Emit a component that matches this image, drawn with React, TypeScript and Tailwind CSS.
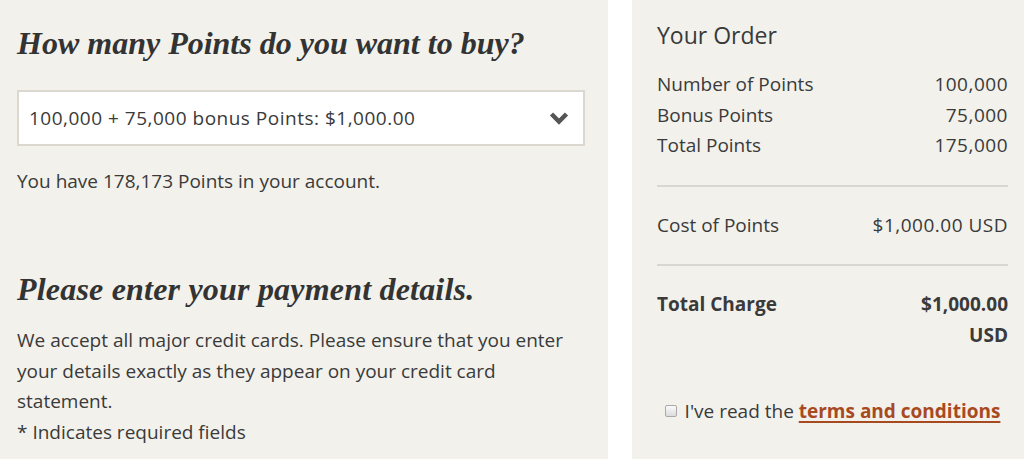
import React from "react";

const sans = { fontFamily: '"Open Sans", "Liberation Sans", sans-serif' };
const serif = { fontFamily: '"Liberation Serif", "DejaVu Serif", serif' };

function Row({ label, value }: { label: string; value: string }) {
  return (
    <div className="flex justify-between leading-[30.5px]">
      <span>{label}</span>
      <span className="text-right tracking-[0.5px]">{value}</span>
    </div>
  );
}

export default function App() {
  return (
    <div className="flex w-[1024px] h-[459px] bg-white text-[#3a3a3a] overflow-hidden" style={sans}>
      <div className="w-[608px] h-full bg-[#f2f1ec] pl-[17px] pr-[23px] pt-[24px]">
        <h1 className="text-[32px] leading-[38px] font-bold italic text-[#333]" style={serif}>
          How many Points do you want to buy?
        </h1>
        <div className="mt-[28px] h-[56px] w-[568px] bg-white border-2 border-[#dcd8d0] flex items-center justify-between pl-[10px] pr-[14px] text-[19px]">
          <span className="tracking-[0.5px]">100,000 + 75,000 bonus Points: $1,000.00</span>
          <svg width="20" height="14" viewBox="0 0 20 14">
            <polyline points="2.5,3 10,10.5 17.5,3" fill="none" stroke="#555" strokeWidth="4.5" strokeLinecap="butt" strokeLinejoin="miter" />
          </svg>
        </div>
        <p className="mt-[20px] text-[19px] leading-[30px]">You have 178,173 Points in your account.</p>
        <h2 className="mt-[74px] text-[32px] leading-[38px] font-bold italic text-[#333] tracking-[0.2px]" style={serif}>
          Please enter your payment details.
        </h2>
        <p className="mt-[17px] text-[19px] leading-[30.5px]">
          We accept all major credit cards. Please ensure that you enter your details exactly as they appear on your credit card statement.
          <br />* Indicates required fields
        </p>
      </div>
      <div className="w-[24px] h-full bg-white" />
      <div className="w-[392px] h-full bg-[#f2f1ec] pl-[25px] pr-[16px] pt-[20px] text-[19px]">
        <h3 className="text-[23px] leading-[30px]">Your Order</h3>
        <div className="mt-[19px]">
          <Row label="Number of Points" value="100,000" />
          <Row label="Bonus Points" value="75,000" />
          <Row label="Total Points" value="175,000" />
        </div>
        <div className="mt-[24px] border-t-2 border-[#d9d7d2]" />
        <div className="mt-[23px]">
          <Row label="Cost of Points" value="$1,000.00 USD" />
        </div>
        <div className="mt-[24px] border-t-2 border-[#d9d7d2]" />
        <div className="mt-[23px] flex justify-between font-bold leading-[30.5px]">
          <span>Total Charge</span>
          <span className="text-right w-[110px]">$1,000.00 USD</span>
        </div>
        <div className="mt-[47px] flex items-center justify-center gap-[8px]">
          <span className="inline-block w-[12px] h-[12px] rounded-[2px] border border-[#a9a9a9] bg-gradient-to-b from-[#fafafa] to-[#dcdcdc]" />
          <span>
            I've read the{" "}
            <a className="font-bold text-[#a84a1f] underline underline-offset-[3px] decoration-2">terms and conditions</a>
          </span>
        </div>
      </div>
    </div>
  );
}
